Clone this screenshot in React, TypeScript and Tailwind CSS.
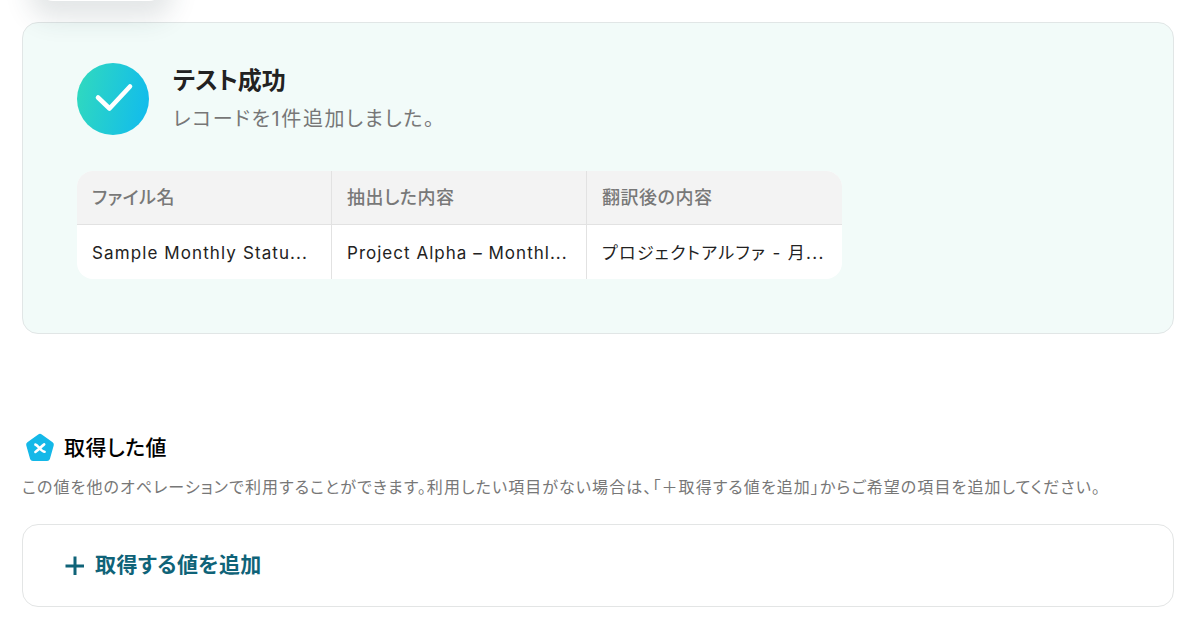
import React from 'react';

const font = { fontFamily: 'Inter, "Noto Sans CJK JP", sans-serif' };

const columns = [
  { title: 'ファイル名', value: 'Sample Monthly Statu...', spacing: 'tracking-[0.065em]' },
  { title: '抽出した内容', value: 'Project Alpha – Monthl...', spacing: 'tracking-[0.06em]' },
  { title: '翻訳後の内容', value: 'プロジェクトアルファ - 月...', spacing: 'tracking-[0.08em]' },
];

function CheckBadge() {
  return (
    <svg width="72" height="72" viewBox="0 0 72 72" className="shrink-0">
      <defs>
        <linearGradient id="badge" x1="0" y1="0.4" x2="1" y2="0.6">
          <stop offset="0" stopColor="#2fd8c0" />
          <stop offset="1" stopColor="#12bcec" />
        </linearGradient>
      </defs>
      <circle cx="36" cy="36" r="36" fill="url(#badge)" />
      <path d="M21 34.5 L32.5 45.5 L53 23.5" fill="none" stroke="#fff" strokeWidth="4.6" strokeLinecap="round" strokeLinejoin="round" />
    </svg>
  );
}

function PentagonIcon() {
  return (
    <svg width="30" height="30" viewBox="0 0 30 30" className="shrink-0">
      <path d="M13.2 1.4 a3 3 0 0 1 3.6 0 L27.6 9.2 a3 3 0 0 1 1.1 3.4 L24.9 26 a3 3 0 0 1 -2.9 2.1 H8 a3 3 0 0 1 -2.9 -2.1 L1.3 12.6 a3 3 0 0 1 1.1 -3.4 Z" fill="#14b8e8" />
      <path d="M10.4 11.6 C13 12 16 18.6 19.6 18.8 M19.2 11.4 C16.8 13 13.4 17 10.4 19" fill="none" stroke="#fff" strokeWidth="2.6" strokeLinecap="round" />
    </svg>
  );
}

export default function App() {
  return (
    <div className="h-[618px] w-[1182px] overflow-hidden bg-white pl-[22px] pr-2 [font-feature-settings:'palt']" style={font}>
      {/* bottom edge of the floating bar scrolled off above the panel */}
      <div className="relative">
        <div className="absolute -top-[40px] left-[17px] h-[41px] w-[124px] rounded-b-[14px] bg-white shadow-[0_8px_26px_10px_rgba(40,60,70,0.13)]" />
      </div>

      <div className="pt-[22px]">
        <section className="h-[312px] rounded-[16px] border border-[#e1e6e6] bg-[#f2fbf9] pl-[54px] pt-[40px]">
          <div className="flex items-center gap-6">
            <CheckBadge />
            <div className="mt-[2px]">
              <h2 className="text-[24px] leading-[32px] font-semibold text-[#222]">テスト成功</h2>
              <p className="mt-[6px] text-[20px] leading-[32px] tracking-[0.08em] text-[#777]">レコードを1件追加しました。</p>
            </div>
          </div>

          <div className="mt-[36px] grid w-[765px] grid-cols-3 overflow-hidden rounded-[16px] bg-white">
            {columns.map((col, i) => (
              <div key={col.title} className={i < 2 ? 'min-w-0 border-r border-[#e2e2e2]' : 'min-w-0'}>
                <div className="flex h-[54px] items-center border-b border-[#e2e2e2] bg-[#f3f3f3] px-[15px] text-[18px] font-medium tracking-[0.03em] text-[#787878]">
                  {col.title}
                </div>
                <div className="flex h-[54px] items-center px-[15px] pt-[3px]">
                  <span className={`text-[17px] whitespace-nowrap text-[#222] ${col.spacing}`}>{col.value}</span>
                </div>
              </div>
            ))}
          </div>
        </section>
      </div>

      <div className="mt-[98px] flex h-[32px] items-center gap-[9px] pl-[3px]">
        <PentagonIcon />
        <h3 className="text-[21px] leading-[32px] font-medium tracking-[0.02em] text-black">取得した値</h3>
      </div>
      <p className="mt-[11px] text-[16px] leading-[24px] tracking-[0.068em] whitespace-nowrap text-[#777]">
        この値を他のオペレーションで利用することができます。利用したい項目がない場合は、「＋取得する値を追加」からご希望の項目を追加してください。
      </p>

      <div className="mt-[25px] flex h-[83px] items-center gap-[9px] rounded-[16px] border border-[#e3e5e5] bg-white pl-[41px]">
        <svg width="22" height="22" viewBox="0 0 22 22" className="shrink-0">
          <path d="M11 1.5 V20 M1.5 11 H20" stroke="#0f6378" strokeWidth="3" />
        </svg>
        <span className="-mt-[2px] text-[21px] font-bold tracking-[0.02em] text-[#0f6378]">取得する値を追加</span>
      </div>
    </div>
  );
}
